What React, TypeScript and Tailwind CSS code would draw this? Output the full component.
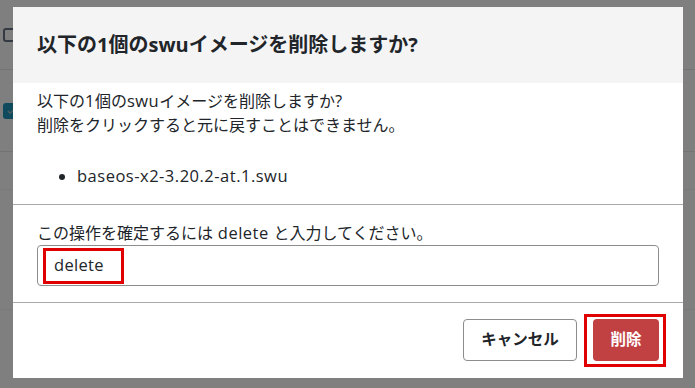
import React from 'react';

function Latin({ children }: { children: React.ReactNode }) {
  return <span className="text-[16.5px] tracking-[0.5px]">{children}</span>;
}

export default function App() {
  return (
    <div
      className="relative w-[695px] h-[388px] overflow-hidden bg-white"
      style={{ fontFamily: '"Open Sans", "Noto Sans CJK JP", sans-serif' }}
    >
      {/* Page behind the dialog */}
      <div className="flex flex-col">
        <div className="h-[70px] flex items-center pl-[3px] border-b border-gray-200">
          <div className="w-[14px] h-[14px] rounded-[3px] border-2 border-gray-500" />
        </div>
        <div className="h-[82px] flex items-center pl-[3px] border-b border-gray-200">
          <div className="w-[16px] h-[16px] rounded-[3px] bg-[#1f97b8] flex items-center justify-center">
            <svg width="11" height="11" viewBox="0 0 12 12" fill="none">
              <path d="M2 6.5l2.6 2.5L10 3.5" stroke="#9ab8c4" strokeWidth="1.6" />
            </svg>
          </div>
        </div>
        <div className="h-[38px] border-b border-gray-100" />
        <div className="h-[120px] border-b border-gray-100" />
      </div>

      {/* Overlay */}
      <div className="absolute inset-0 bg-black/50" />

      {/* Dialog */}
      <div className="absolute left-[13px] top-[7px] w-[670px] h-[371px] bg-white flex flex-col text-[#212529]">
        <div className="h-[76px] bg-[#f4f4f5] flex items-center px-6">
          <h2 className="text-[20px] font-bold leading-none pb-[1px]">以下の1個のswuイメージを削除しますか?</h2>
        </div>

        <div className="px-6 pt-[6px] pb-[16px] text-[16px] leading-[24px] border-b border-[#a8a8a8]">
          <p>以下の<Latin>1</Latin>個の<Latin>swu</Latin>イメージを削除しますか<Latin>?</Latin></p>
          <p>削除をクリックすると元に戻すことはできません。</p>
          <ul className="list-disc pl-10 mt-[27px]">
            <li><Latin>baseos-x2-3.20.2-at.1.swu</Latin></li>
          </ul>
        </div>

        <div className="px-6 pt-[16px] pb-[16px] border-b border-[#a8a8a8]">
          <label className="block text-[16px] leading-[24px]">
            この操作を確定するには<Latin> delete </Latin>と入力してください。
          </label>
          <div className="relative h-[41px] rounded-[4px] border border-[#8d8d8d] flex items-center pl-[16px] text-[16.5px] tracking-[0.3px]">
            <span>delete</span>
            <div className="absolute left-[5px] top-[2px] w-[81px] h-[36px] border-[3px] border-[#e00000]" />
          </div>
        </div>

        <div className="flex-1 flex items-start justify-end gap-4 px-6 pt-[16px]">
          <button className="h-[42px] w-[114px] rounded-[4px] border border-[#8d8d8d] bg-white text-[15.5px] font-bold text-[#212529]">
            キャンセル
          </button>
          <div className="relative">
            <button className="h-[42px] w-[66px] rounded-[4px] bg-[#c14143] text-[15.5px] font-bold text-white">
              削除
            </button>
            <div className="absolute -left-[9px] -top-[5px] -right-[7px] -bottom-[6px] border-[3px] border-[#e00000]" />
          </div>
        </div>
      </div>
    </div>
  );
}
